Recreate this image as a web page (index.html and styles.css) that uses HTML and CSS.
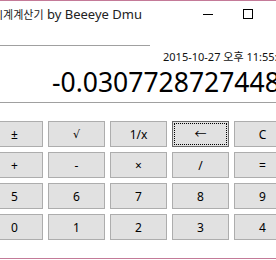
FILE: index.html
```
<!DOCTYPE html>
<html>
	<head>
		<meta charset="UTF-8">
		<title>시계계산기</title>
		<link rel="stylesheet" href="styles.css">
	</head>
	<body>
		<div id="win">
			<div class="titlebar">
				<span class="title">시계계산기<span class="en"> by Beeeye Dmu</span></span>
				<div class="ctrls">
					<a href="javascript:;" class="ctrl"><i class="min"></i></a>
					<a href="javascript:;" class="ctrl"><i class="max"></i></a>
					<a href="javascript:;" class="ctrl">&#x2715;</a>
				</div>
			</div>
			<div class="rule short"></div>
			<div class="screen">
				<div class="date">2015-10-27 오후 11:55:32</div>
				<div class="num">-0.03077287274488</div>
			</div>
			<div class="rule"></div>
			<div class="keys">
				<a href="javascript:;">±</a>
				<a href="javascript:;" class="sym">√</a>
				<a href="javascript:;">1/x</a>
				<a href="javascript:;" class="focus">←</a>
				<a href="javascript:;">C</a>
				<a href="javascript:;">+</a>
				<a href="javascript:;">-</a>
				<a href="javascript:;">×</a>
				<a href="javascript:;">/</a>
				<a href="javascript:;">=</a>
				<a href="javascript:;">5</a>
				<a href="javascript:;">6</a>
				<a href="javascript:;">7</a>
				<a href="javascript:;">8</a>
				<a href="javascript:;">9</a>
				<a href="javascript:;">0</a>
				<a href="javascript:;">1</a>
				<a href="javascript:;">2</a>
				<a href="javascript:;">3</a>
				<a href="javascript:;">4</a>
			</div>
		</div>
	</body>
</html>
```
FILE: styles.css
```
body{
	margin: 0;
	overflow: hidden;
	background: #fff;
	font-family: "Noto Sans", "Noto Sans CJK KR", sans-serif;
}
a{
	text-decoration: none;
	color: black;
}
#win{
	width: 330px;
	height: 259px;
	margin-left: -14px;
	box-sizing: border-box;
	border-top: 1px solid #c47a98;
	border-bottom: 1px solid #c47a98;
	overflow: hidden;
}
.titlebar{
	height: 44px;
	display: flex;
	align-items: flex-start;
	padding-top: 5px;
	box-sizing: border-box;
}
.title{
	padding-left: 7px;
	font-size: 11px;
	line-height: 16px;
	color: #222;
	white-space: nowrap;
	flex: 1;
}
.title .en{
	font-size: 13px;
}
.ctrls{
	display: flex;
	margin-right: 8px;
}
.ctrl{
	width: 40px;
	height: 16px;
	display: flex;
	align-items: center;
	justify-content: center;
	font-size: 11px;
}
.min{
	width: 10px;
	height: 1px;
	background: #000;
}
.max{
	width: 8px;
	height: 8px;
	border: 1px solid #000;
}
.rule{
	height: 1px;
	background: #a0a0a0;
}
.rule.short{
	width: 164px;
}
.screen{
	height: 56px;
	overflow: hidden;
	white-space: nowrap;
}
.date{
	padding-left: 177px;
	margin-top: 3px;
	font-size: 11px;
	line-height: 16px;
	color: #111;
}
.num{
	padding-left: 66px;
	font-size: 26.5px;
	line-height: 34px;
	color: #000;
}
.keys{
	display: grid;
	grid-template-columns: repeat(5, 57px);
	grid-auto-rows: 26px;
	gap: 5px;
	margin-top: 18px;
}
.keys a{
	display: flex;
	align-items: center;
	justify-content: center;
	background: #e1e1e1;
	border: 1px solid #adadad;
	font-size: 12px;
}
.keys .sym{
	font-family: "DejaVu Sans", sans-serif;
	font-size: 11px;
}
.keys .focus{
	border-color: #6a6a6a;
	outline: 1px dotted #000;
	outline-offset: -3px;
}
```
